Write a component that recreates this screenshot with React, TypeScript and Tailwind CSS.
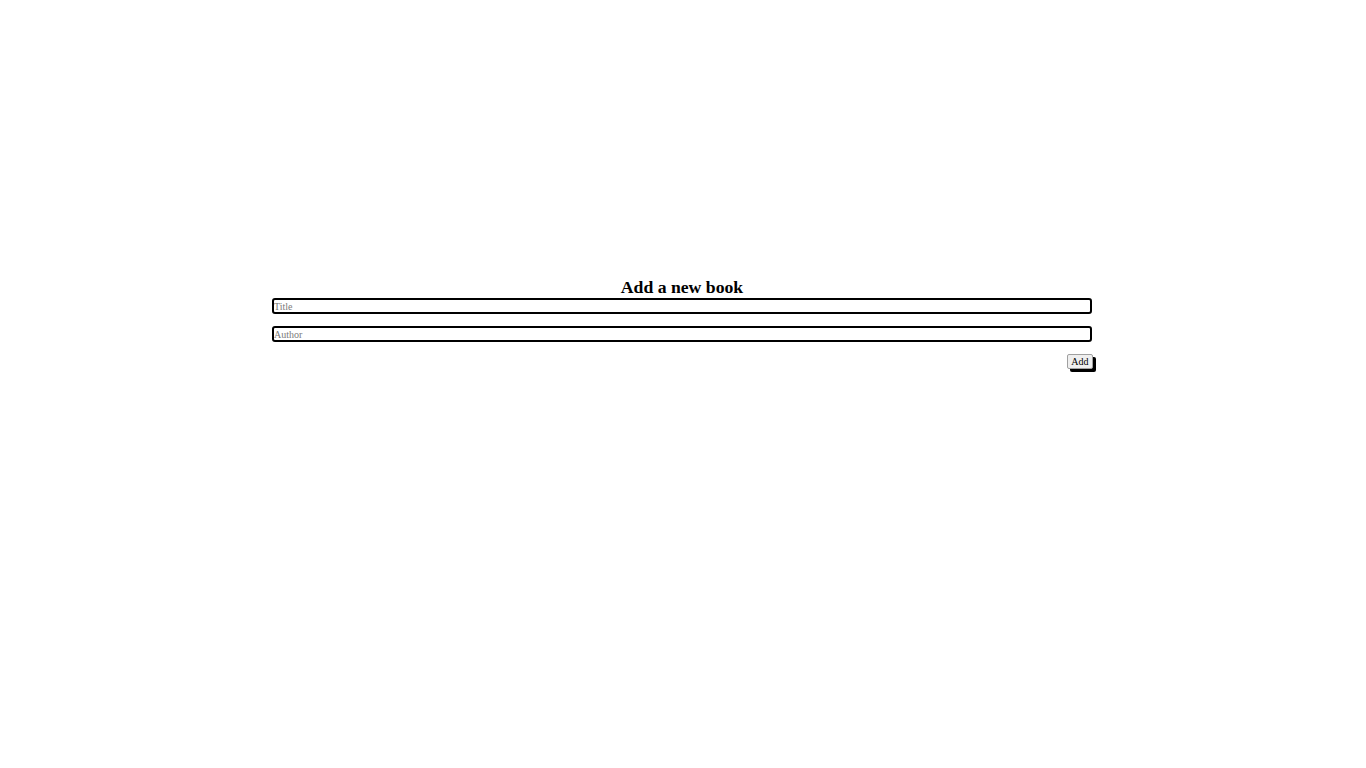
export default function App() {
  return (
    <div className="min-h-screen bg-white pt-[277px] font-['Liberation_Serif','Times_New_Roman',serif] text-black">
      <div className="mx-auto flex w-[820px] -translate-x-px flex-col">
        <h3 className="text-center text-[17.7px] font-bold leading-[21px]">Add a new book</h3>
        <form className="flex flex-col gap-[12px]" onSubmit={(e) => e.preventDefault()}>
          <input
            type="text"
            placeholder="Title"
            className="h-[16px] w-full rounded-[3px] border-2 border-black px-0 text-[10px] leading-none outline-none placeholder:text-[#7a7a7a]"
          />
          <input
            type="text"
            placeholder="Author"
            className="h-[16px] w-full rounded-[3px] border-2 border-black px-0 text-[10px] leading-none outline-none placeholder:text-[#7a7a7a]"
          />
          <button
            type="submit"
            className="mr-[-1px] h-[15px] self-end rounded-[2px] border border-[#a0a0a0] bg-[#efefef] px-[3.5px] text-[10px] leading-none shadow-[3px_3px_0_#000]"
          >
            Add
          </button>
        </form>
      </div>
    </div>
  )
}
